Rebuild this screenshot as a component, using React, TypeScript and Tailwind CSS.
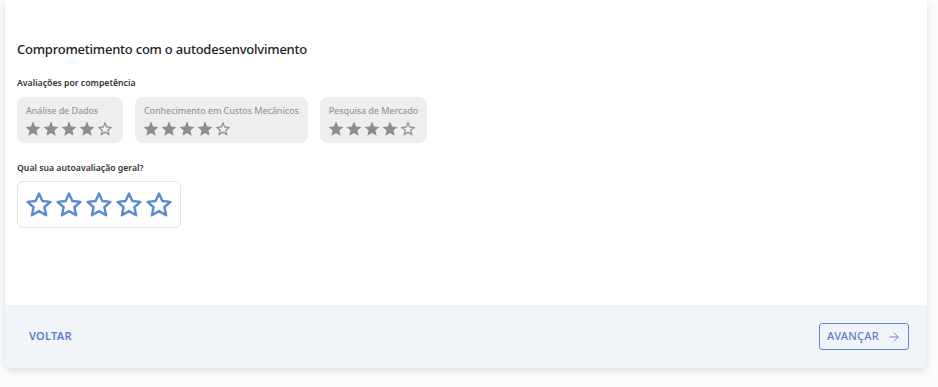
import { MdStar, MdStarBorder } from 'react-icons/md'
import { ArrowRight } from 'lucide-react'

const competencias = [
  { label: 'Análise de Dados', nota: 4 },
  { label: 'Conhecimento em Custos Mecânicos', nota: 4 },
  { label: 'Pesquisa de Mercado', nota: 4 },
]

function OutlineStar() {
  return (
    <svg width="28" height="28" viewBox="0 0 24 24" fill="none" stroke="#5a8ccf" strokeWidth="2.1" strokeLinejoin="round">
      <polygon points="12,2.2 14.9,8.6 21.8,9.3 16.6,13.9 18.1,20.8 12,17.3 5.9,20.8 7.4,13.9 2.2,9.3 9.1,8.6" />
    </svg>
  )
}

export default function App() {
  return (
    <div className="w-[938px] h-[387px] bg-[#fcfcfc] overflow-hidden" style={{ fontFamily: '"Noto Sans", sans-serif' }}>
      <div className="ml-[5px] w-[922px] h-[368px] bg-white rounded-b-md shadow-[0_3px_8px_rgba(0,0,0,0.12)] flex flex-col">
        <div className="flex-1 px-3 pt-[39px]">
          <h2 className="text-[13px] leading-5 font-medium tracking-[-0.22px] text-[#222]">Comprometimento com o autodesenvolvimento</h2>

          <p className="mt-[18px] text-[8.7px] leading-3 font-semibold text-[#333]">Avaliações por competência</p>
          <div className="mt-2 flex gap-3">
            {competencias.map((c) => (
              <div key={c.label} className="bg-[#eeeeee] rounded-lg px-[9px] pt-[8px] pb-[5px] h-[46px]">
                <div className="text-[9px] leading-3 font-medium tracking-[-0.1px] text-[#999]">{c.label}</div>
                <div className="flex mt-[3px] -ml-[2px]">
                  {[1, 2, 3, 4, 5].map((i) =>
                    i <= c.nota
                      ? <MdStar key={i} size={18} className="text-[#8c8c8c]" />
                      : <MdStarBorder key={i} size={18} className="text-[#8c8c8c]" />
                  )}
                </div>
              </div>
            ))}
          </div>

          <p className="mt-[19px] text-[8.7px] leading-3 font-semibold text-[#333]">Qual sua autoavaliação geral?</p>
          <div className="mt-[7px] inline-flex items-center gap-[2px] border border-[#e3e3e3] rounded-md px-[7px] h-[47px]">
            {[1, 2, 3, 4, 5].map((i) => (
              <OutlineStar key={i} />
            ))}
          </div>
        </div>

        <div className="h-[63px] bg-[#f1f4f9] rounded-b-md flex items-center justify-between px-[18px]">
          <button className="px-[6px] text-[11px] font-semibold tracking-wide text-[#5b7fc4]">VOLTAR</button>
          <button className="flex items-center gap-2 border border-[#5b8ccc] rounded-[3px] h-[27px] px-[7px] text-[11px] font-medium tracking-wide text-[#5b7fc4]">
            AVANÇAR
            <ArrowRight size={14} strokeWidth={1.5} />
          </button>
        </div>
      </div>
    </div>
  )
}
